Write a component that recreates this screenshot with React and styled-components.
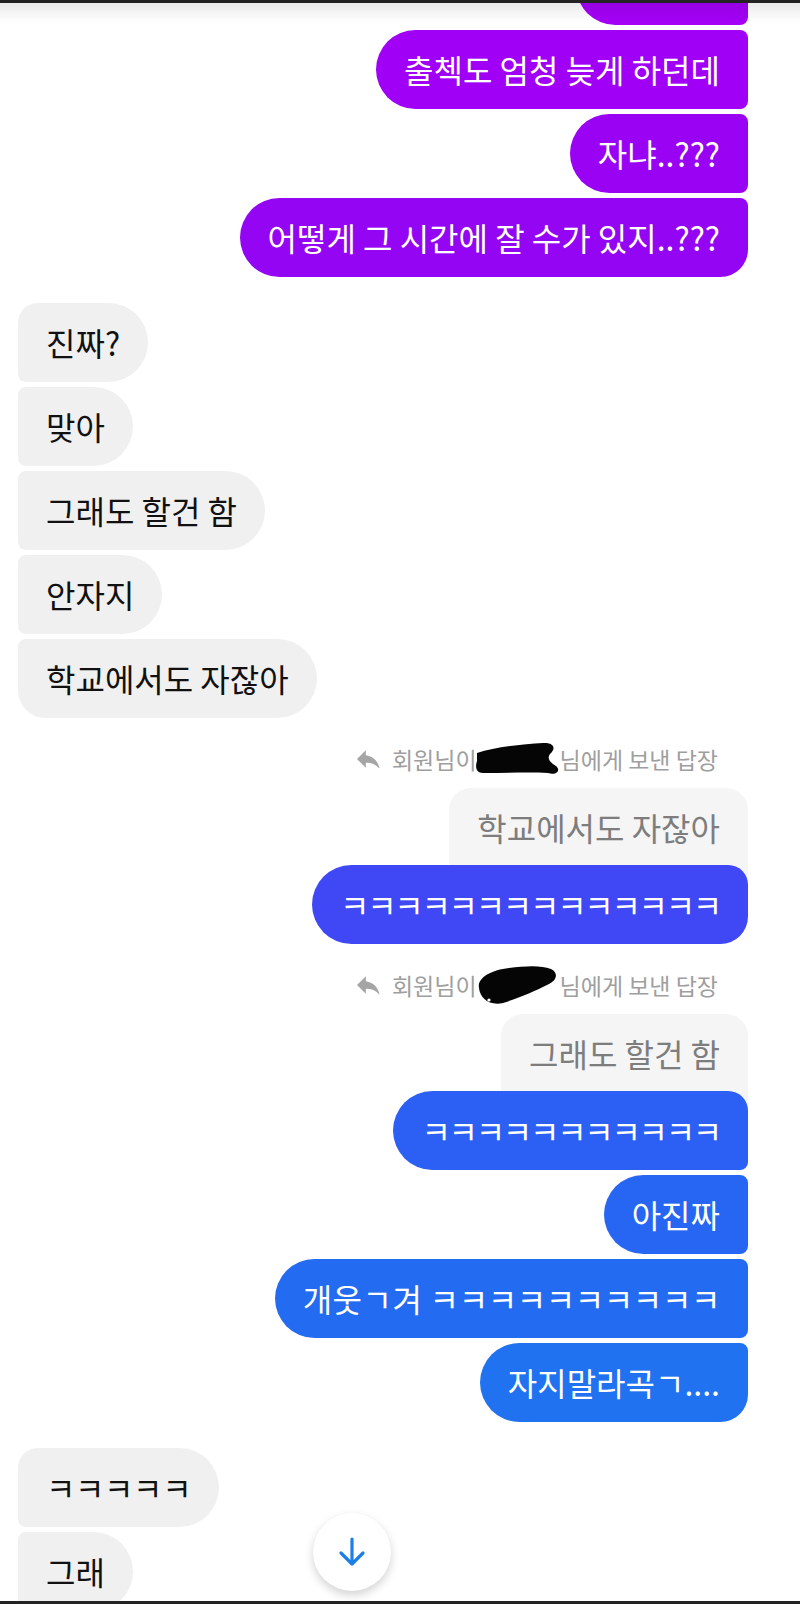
import React from "react";
import styled, { createGlobalStyle, css } from "styled-components";

const GlobalStyle = createGlobalStyle`
  html, body {
    margin: 0;
    padding: 0;
    background: #ffffff;
  }
  * {
    box-sizing: border-box;
  }
`;

const FULL = "40px";
const SMALL = "8px";
const FIRST = "20px";
const LAST = "28px";

// corner radius for a bubble depending on side and place in a group
function radius(me, pos) {
  const top = pos === "first" || pos === "single" ? FIRST : SMALL;
  const bottom = pos === "last" || pos === "single" ? LAST : SMALL;
  if (me) return `${FULL} ${top} ${bottom} ${FULL}`;
  return `${top} ${FULL} ${FULL} ${bottom}`;
}

const purple = ["#a400f6", "#a000f5", "#9a02f4", "#9406f3"];

export default function App() {
  return (
    <>
      <GlobalStyle />
      <Page>
        <TopEdge />
        <Viewport>
          <Shade />
          <Thread>
            <Group $me>
              <CutBubble $bg={purple[0]} />
              <Bubble $me $pos="mid" $bg={purple[1]}>출첵도 엄청 늦게 하던데</Bubble>
              <Bubble $me $pos="mid" $bg={purple[2]}>자냐..???</Bubble>
              <Bubble $me $pos="last" $bg={purple[3]}>어떻게 그 시간에 잘 수가 있지..???</Bubble>
            </Group>

            <Group>
              <Bubble $pos="first">진짜?</Bubble>
              <Bubble $pos="mid">맞아</Bubble>
              <Bubble $pos="mid">그래도 할건 함</Bubble>
              <Bubble $pos="mid">안자지</Bubble>
              <Bubble $pos="last">학교에서도 자잖아</Bubble>
            </Group>

            <ReplyBlock>
              <ReplyLabel>
                <ReplyIcon />
                <span>회원님이</span>
                <Redacted variant={1} />
                <span>님에게 보낸 답장</span>
              </ReplyLabel>
              <Quote>학교에서도 자잖아</Quote>
              <Group $me $over>
                <Bubble $me $pos="single" $bg="#3f48f4">
                  <Laugh>ㅋㅋㅋㅋㅋㅋㅋㅋㅋㅋㅋㅋㅋㅋ</Laugh>
                </Bubble>
              </Group>
            </ReplyBlock>

            <ReplyBlock>
              <ReplyLabel>
                <ReplyIcon />
                <span>회원님이</span>
                <Redacted variant={2} />
                <span>님에게 보낸 답장</span>
              </ReplyLabel>
              <Quote>그래도 할건 함</Quote>
              <Group $me $over>
                <Bubble $me $pos="first" $bg="#2c5ff3">
                  <Laugh>ㅋㅋㅋㅋㅋㅋㅋㅋㅋㅋㅋ</Laugh>
                </Bubble>
                <Bubble $me $pos="mid" $bg="#2766f2">아진짜</Bubble>
                <Bubble $me $pos="mid" $bg="#236cf1">
                  <Wide>개웃ㄱ겨</Wide> <Laugh $wide>ㅋㅋㅋㅋㅋㅋㅋㅋㅋㅋ</Laugh>
                </Bubble>
                <Bubble $me $pos="last" $bg="#2072f0">자지말라곡ㄱ....</Bubble>
              </Group>
            </ReplyBlock>

            <Group>
              <Bubble $pos="first">
                <Laugh $wide>ㅋㅋㅋㅋㅋ</Laugh>
              </Bubble>
              <Bubble $pos="mid">그래</Bubble>
            </Group>
          </Thread>

          <ScrollButton>
            <svg width="28" height="30" viewBox="0 0 28 30" fill="none">
              <path d="M14 2v25M3 16l11 11 11-11" stroke="#1b7fe6" strokeWidth="3.2" strokeLinecap="round" strokeLinejoin="round" />
            </svg>
          </ScrollButton>
        </Viewport>
        <BottomEdge />
      </Page>
    </>
  );
}

function ReplyIcon() {
  return (
    <svg width="24" height="18" viewBox="3 5 19 14" fill="#a5a5a5">
      <path d="M10 9V5l-7 7 7 7v-4.1c5 0 8.5 1.6 11 5.1-1-5-4-10-11-11z" />
    </svg>
  );
}

function Redacted({ variant }) {
  if (variant === 1) {
    return (
      <Blot>
        <svg width="86" height="34" viewBox="0 0 86 34">
          <path
            d="M2 11 C 20 5, 48 2, 68 1 C 78 0, 82 6, 75 12 C 72 16, 74 20, 81 24 C 86 28, 82 34, 73 31 C 55 30, 30 31, 8 31 C 1 31, 0 25, 2 19 Z"
            fill="#050505"
          />
        </svg>
      </Blot>
    );
  }
  return (
    <Blot>
      <svg width="86" height="42" viewBox="0 0 86 42">
        <path
          d="M4 24 C 2 14, 16 6, 34 4 C 50 2, 66 1, 76 5 C 84 9, 82 17, 72 21 C 60 27, 44 34, 28 39 C 14 42, 5 34, 4 24 Z"
          fill="#050505"
        />
        <circle cx="14" cy="36" r="1.6" fill="#ffffff" />
      </svg>
    </Blot>
  );
}

const Page = styled.div`
  width: 800px;
  height: 1604px;
  display: flex;
  flex-direction: column;
  overflow: hidden;
  background: #ffffff;
  font-family: "Noto Sans CJK KR", "Noto Sans", sans-serif;
`;

const TopEdge = styled.div`
  height: 3px;
  flex: none;
  background: #232323;
`;

const BottomEdge = styled.div`
  height: 3px;
  flex: none;
  background: #232323;
`;

const Viewport = styled.div`
  flex: 1;
  position: relative;
  overflow: hidden;
`;

const Shade = styled.div`
  position: absolute;
  top: 0;
  left: 0;
  right: 0;
  height: 20px;
  z-index: 5;
  background: linear-gradient(rgba(0, 0, 0, 0.08), rgba(0, 0, 0, 0));
  pointer-events: none;
`;

const Thread = styled.div`
  display: flex;
  flex-direction: column;
  gap: 26px;
  margin-top: -57px;
  padding: 0 52px 0 18px;
`;

const Group = styled.div`
  display: flex;
  flex-direction: column;
  gap: 5px;
  align-items: ${(p) => (p.$me ? "flex-end" : "flex-start")};
  ${(p) =>
    p.$over &&
    css`
      position: relative;
      z-index: 1;
      margin-top: -21px;
      align-self: stretch;
    `}
`;

const Bubble = styled.div`
  height: 79px;
  padding: 19px 28px 20px;
  white-space: pre;
  font-size: 32px;
  line-height: 40px;
  color: ${(p) => (p.$me ? "#ffffff" : "#111111")};
  background: ${(p) => p.$bg || "#f0f0f0"};
  border-radius: ${(p) => radius(p.$me, p.$pos)};
`;

const CutBubble = styled.div`
  width: 172px;
  height: 79px;
  background: ${(p) => p.$bg};
  border-radius: ${FULL} ${SMALL} ${SMALL} ${FULL};
`;

const Laugh = styled.span`
  letter-spacing: ${(p) => (p.$wide ? "-0.4px" : "-2.3px")};
`;

const Wide = styled.span`
  letter-spacing: 0.5px;
`;

const ReplyBlock = styled.div`
  display: flex;
  flex-direction: column;
  align-items: flex-end;
`;

const ReplyLabel = styled.div`
  height: 30px;
  display: flex;
  align-items: center;
  margin-right: 30px;
  margin-bottom: 14px;
  font-size: 23px;
  color: #9e9e9e;
  white-space: nowrap;

  svg:first-child {
    margin-right: 11px;
  }
`;

const Blot = styled.span`
  display: inline-flex;
  align-items: center;
  margin: 0 -12px 0 -2px;
  position: relative;
  z-index: 1;
`;

const Quote = styled.div`
  padding: 19px 28px 39px;
  font-size: 32px;
  line-height: 40px;
  color: #7d7d7d;
  background: #f5f5f5;
  border-radius: 22px 22px 0 0;
  white-space: nowrap;
`;

const ScrollButton = styled.div`
  position: absolute;
  left: 313px;
  bottom: 10px;
  width: 78px;
  height: 78px;
  border-radius: 50%;
  background: #ffffff;
  box-shadow: 0 4px 10px rgba(0, 0, 0, 0.18);
  display: flex;
  align-items: center;
  justify-content: center;
  z-index: 3;
`;
